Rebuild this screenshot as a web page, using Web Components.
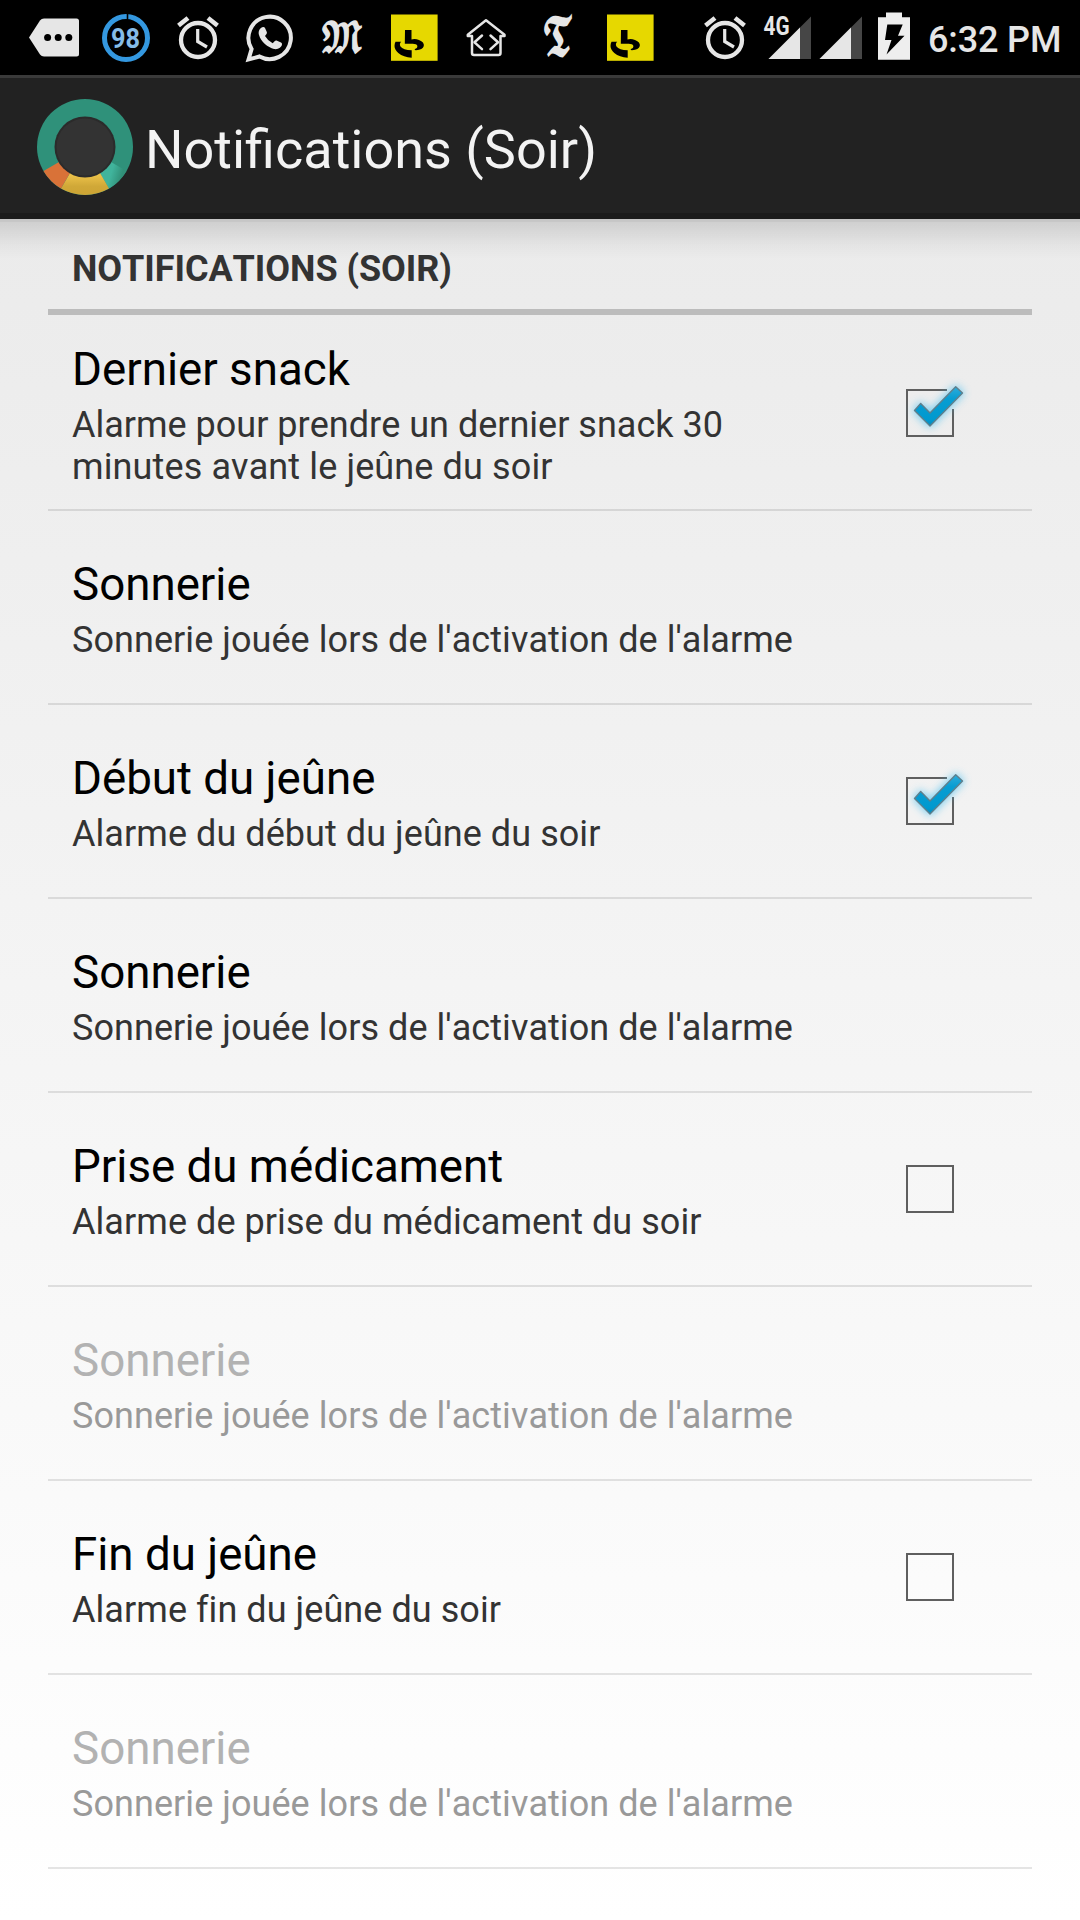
<!DOCTYPE html>
<html lang="fr">
<head>
<meta charset="utf-8">
<title>Notifications (Soir)</title>
<style>
html,body{margin:0;padding:0}
body{font-family:Roboto,sans-serif;width:1080px;height:1920px;overflow:hidden}
</style>
</head>
<body>
<settings-screen>
  <status-bar slot="status" time="6:32 PM"></status-bar>
  <action-bar slot="bar">Notifications (Soir)</action-bar>
  <pref-section>NOTIFICATIONS (SOIR)</pref-section>
  <pref-row check="on" tall>Dernier snack<span slot="summary">Alarme pour prendre un dernier snack 30 minutes avant le jeûne du soir</span></pref-row>
  <pref-row>Sonnerie<span slot="summary">Sonnerie jouée lors de l'activation de l'alarme</span></pref-row>
  <pref-row check="on">Début du jeûne<span slot="summary">Alarme du début du jeûne du soir</span></pref-row>
  <pref-row>Sonnerie<span slot="summary">Sonnerie jouée lors de l'activation de l'alarme</span></pref-row>
  <pref-row check="off">Prise du médicament<span slot="summary">Alarme de prise du médicament du soir</span></pref-row>
  <pref-row disabled>Sonnerie<span slot="summary">Sonnerie jouée lors de l'activation de l'alarme</span></pref-row>
  <pref-row check="off">Fin du jeûne<span slot="summary">Alarme fin du jeûne du soir</span></pref-row>
  <pref-row disabled>Sonnerie<span slot="summary">Sonnerie jouée lors de l'activation de l'alarme</span></pref-row>
</settings-screen>
<script>
const define = (name, render) => customElements.define(name, class extends HTMLElement {
  constructor() { super(); this.attachShadow({ mode: 'open' }); }
  connectedCallback() { this.shadowRoot.innerHTML = render(this); }
});

const ICONS = {
  more: [72, '<path d="M11 37.500L22 20.500Q23.500 18.500 26 18.500H58.500Q61 18.500 61 21V54Q61 56.500 58.500 56.500H26Q23.500 56.500 22 54.500Z" fill="#e6e6e6"/><g fill="#000"><circle cx="29.600" cy="37.500" r="3.500"/><circle cx="40.200" cy="37.500" r="3.500"/><circle cx="50.800" cy="37.500" r="3.500"/></g>'],
  level: [72, '<circle cx="36" cy="38" r="21.500" fill="none" stroke="#3498e0" stroke-width="5"/><path d="M37.500 13V20" stroke="#000" stroke-width="1.600"/><text x="35.500" y="47.500" text-anchor="middle" font-family="Roboto,sans-serif" font-weight="700" font-size="27" textLength="29" lengthAdjust="spacingAndGlyphs" fill="#85bce8">98</text>'],
  alarm: [72, '<g fill="none" stroke="#e6e6e6"><circle cx="36" cy="40" r="17" stroke-width="4.300"/><path d="M35.700 29V41.500L45 47" stroke-width="3.200"/><path d="M16.500 25.500L26 18M55.500 25.500L46 18" stroke-width="4.600"/></g>'],
  whatsapp: [72, '<path d="M14.500 59.500L17.600 49A21.200 21.200 0 1 1 25.500 56.500Z" fill="none" stroke="#e6e6e6" stroke-width="4"/><path d="M28.200 27.200C25.500 28.500 24 31.200 25 35C26.800 41.500 34 47.500 40 49C44 49.800 47.500 47.500 48 44.500Q48.200 43.300 47 42.600L42.500 40.600Q41.500 40.300 40.600 41.200L38.700 43.200Q33.500 40.500 31 36L32.500 34Q33.200 33 32.800 32L31 28Q30.400 26.700 28.200 27.200Z" fill="#e6e6e6"/>'],
  journal: [72, '<text x="36" y="52" text-anchor="middle" font-family="\'DejaVu Sans\',\'DejaVu Math TeX Gyre\',serif" font-size="40" textLength="43" lengthAdjust="spacingAndGlyphs" fill="#e6e6e6" stroke="#e6e6e6" stroke-width="1.600">𝕸</text>'],
  post: [72, '<rect x="13" y="14.500" width="46.600" height="46.300" fill="#e6d800"/><path d="M27 30H33.500V39.500Q37 38.500 41 40Q46.500 42 45.800 46Q44.800 50 38 50.200Q36.500 50.200 36.700 49Q40 48 39.200 45.500Q38.500 43.500 34 43.700L26.800 43.800ZM17.500 41.800H23.200Q21 44 22.500 46.500Q25 50 33.700 50.200V57.700Q25.500 57.300 20.300 53Q16.500 49.500 16.500 46Q16.500 43.500 17.500 41.800Z" fill="#000"/>'],
  home: [72, '<g fill="none" stroke="#e6e6e6" stroke-width="2.500" stroke-linejoin="round" stroke-linecap="round"><path d="M22 36H17.800V34.800L36 20.200L54.500 34.800V36H50.500V53Q50.500 55 48.500 55H24Q22 55 22 53Z"/><path d="M32 35.500L24.500 42.300L32 49.200M40.500 35.500L48 42.300L40.500 49.200"/></g>'],
  times: [72, '<text x="36" y="55" text-anchor="middle" font-family="\'DejaVu Sans\',\'DejaVu Math TeX Gyre\',serif" font-size="48" textLength="31" lengthAdjust="spacingAndGlyphs" fill="#e6e6e6" stroke="#e6e6e6" stroke-width="2.400">𝕿</text>'],
  signal4g: [51, '<path d="M7.500 59L50 16.500V59Z" fill="#464646"/><path d="M7.500 59L39 27.500V59Z" fill="#e6e6e6"/><text x="2.500" y="35.300" font-family="Roboto,sans-serif" font-weight="700" font-size="25.500" textLength="26" lengthAdjust="spacingAndGlyphs" fill="#e6e6e6">4G</text>'],
  signal: [51, '<path d="M7.500 59L50 16.500V59Z" fill="#464646"/><path d="M7.500 59L39 27.500V59Z" fill="#e6e6e6"/>'],
  battery: [59, '<path d="M23 17.300V12.500H39V17.300H47V59.800H15V17.300Z" fill="#eee"/><path d="M24.300 24.500H39.700L35 35.700H41.500L23.500 54.500L28.500 40H22Z" fill="#000"/>']
};
define('status-icon', el => {
  const [w, art] = ICONS[el.getAttribute('name')];
  return `<style>:host{display:block;flex:none;height:75px}svg{display:block;overflow:visible}</style><svg width="${w}" height="75" viewBox="0 0 ${w} 75">${art}</svg>`;
});
define('status-bar', el => `<style>
:host{display:flex;height:75px;background:#000;padding-left:18px;box-sizing:border-box}
.gap{width:23px}
.time{margin-left:6px;padding-top:3px;font:500 36px/75px Roboto,sans-serif;letter-spacing:-.15px;color:#e6e6e6;white-space:nowrap}
</style>${['more','level','alarm','whatsapp','journal','post','home','times','post'].map(n => `<status-icon name="${n}"></status-icon>`).join('')}<div class="gap"></div>${['alarm','signal4g','signal','battery'].map(n => `<status-icon name="${n}"></status-icon>`).join('')}<div class="time">${el.getAttribute('time')}</div>`);

define('action-bar', () => `<style>
:host{display:flex;align-items:center;height:144px;box-sizing:border-box;border-top:3px solid #3a3a3a;border-bottom:6px solid #1b1b1b;background:#222;padding:3px 0 0 37px;color:#f3f3f3;font-size:54px;line-height:64px}
svg{margin-right:12px;flex:none}
.title{padding-top:5px;white-space:nowrap}
</style>
<svg width="96" height="96" viewBox="-48 -48 96 96">
<defs><linearGradient id="y" x1="0" y1="0" x2="0" y2="1"><stop offset=".6" stop-color="#eac048"/><stop offset=".82" stop-color="#d0a838"/><stop offset="1" stop-color="#cda434"/></linearGradient>
<linearGradient id="t" x1="0" y1="0" x2="1" y2=".3"><stop offset=".75" stop-color="#40b49c"/><stop offset="1" stop-color="#319078"/></linearGradient></defs>
<circle r="48" fill="#2f917a"/>
<path d="M0 0L41.500 24A48 48 0 0 1 24 41.500Z" fill="url(#t)"/>
<path d="M0 0L24 41.500A48 48 0 0 1 -24 41.500Z" fill="url(#y)"/>
<path d="M0 0L-24 41.500A48 48 0 0 1 -41.500 24Z" fill="#d97238"/>
<circle r="30.500" fill="#2b2b2b"/><circle r="28.500" fill="#333"/></svg>
<div class="title"><slot></slot></div>`);

define('pref-section', () => `<style>
:host{display:flex;align-items:flex-end;height:96px;box-sizing:border-box;border-bottom:6px solid #bcbcbc;padding:0 24px 19px;font-weight:700;font-size:36px;line-height:42px;color:#333;font-kerning:none;letter-spacing:-.06px}
</style><slot></slot>`);

define('check-box', el => `<style>:host{display:block}svg{display:block;overflow:visible}</style>
<svg width="48" height="48" viewBox="0 0 48 48">${el.hasAttribute('on') ? `
<defs><filter id="glow" x="-50%" y="-50%" width="200%" height="200%"><feGaussianBlur stdDeviation="4.500"/></filter>
<linearGradient id="b" x1="0" y1="0" x2="0" y2="1"><stop offset="0" stop-color="#2fabda"/><stop offset=".3" stop-color="#089dd2"/><stop offset=".85" stop-color="#0099cf"/><stop offset="1" stop-color="#0a87b5"/></linearGradient></defs>
<path d="M41 1H1V47H47V20" fill="none" stroke="#5f5f5f" stroke-width="2"/>
<path d="M8.500 21.500L14.700 14.400L24 23.900L49.700 -2.200L56.500 4L24 37Z" fill="#48c0f0" stroke="#48c0f0" stroke-width="3" filter="url(#glow)" opacity=".72"/>
<path d="M8.500 21.500L14.700 14.400L24 23.900L49.700 -2.200L56.500 4L24 37Z" fill="url(#b)" stroke="#5f7f8c" stroke-width="1.400" stroke-linejoin="round"/>` : `
<rect x="1" y="1" width="46" height="46" fill="none" stroke="#5f5f5f" stroke-width="2"/>`}</svg>`);

define('pref-row', el => {
  const c = el.getAttribute('check');
  return `<style>
:host{display:flex;align-items:center;height:194px;box-sizing:border-box;border-bottom:2px solid rgba(0,0,0,.1);padding:0 78px 0 24px;font-kerning:none}
:host([tall]){height:196px}
.text{flex:1;padding-top:3px}
:host([tall]) .text{padding-top:5px}
.title{font-size:45.7px;line-height:56px;margin-bottom:6px;color:#000}
.summary{font-size:36px;line-height:42px;color:#333;letter-spacing:.06px}
:host([check]) .summary{width:700px}
:host([tall]) .summary{letter-spacing:.12px}
:host([tall]) .summary::first-line{letter-spacing:0}
:host([tall]) check-box{margin-top:2px}
:host([disabled]) .title{color:#b2b2b2}
:host([disabled]) .summary{color:#999}
</style><div class="text"><div class="title"><slot></slot></div><div class="summary"><slot name="summary"></slot></div></div>${c ? `<check-box ${c === 'on' ? 'on' : ''}></check-box>` : ''}`;
});

define('settings-screen', () => `<style>
:host{display:flex;flex-direction:column;width:1080px;height:1920px}
main{flex:1;padding:0 48px;background:linear-gradient(rgba(0,0,0,.04),rgba(0,0,0,.04)) 0 0/100% 3px no-repeat,linear-gradient(rgba(0,0,0,.13),rgba(0,0,0,.03) 26px,transparent 40px),linear-gradient(#ebebeb,#fff)}
</style><slot name="status"></slot><slot name="bar"></slot><main><slot></slot></main>`);
</script>
</body>
</html>
